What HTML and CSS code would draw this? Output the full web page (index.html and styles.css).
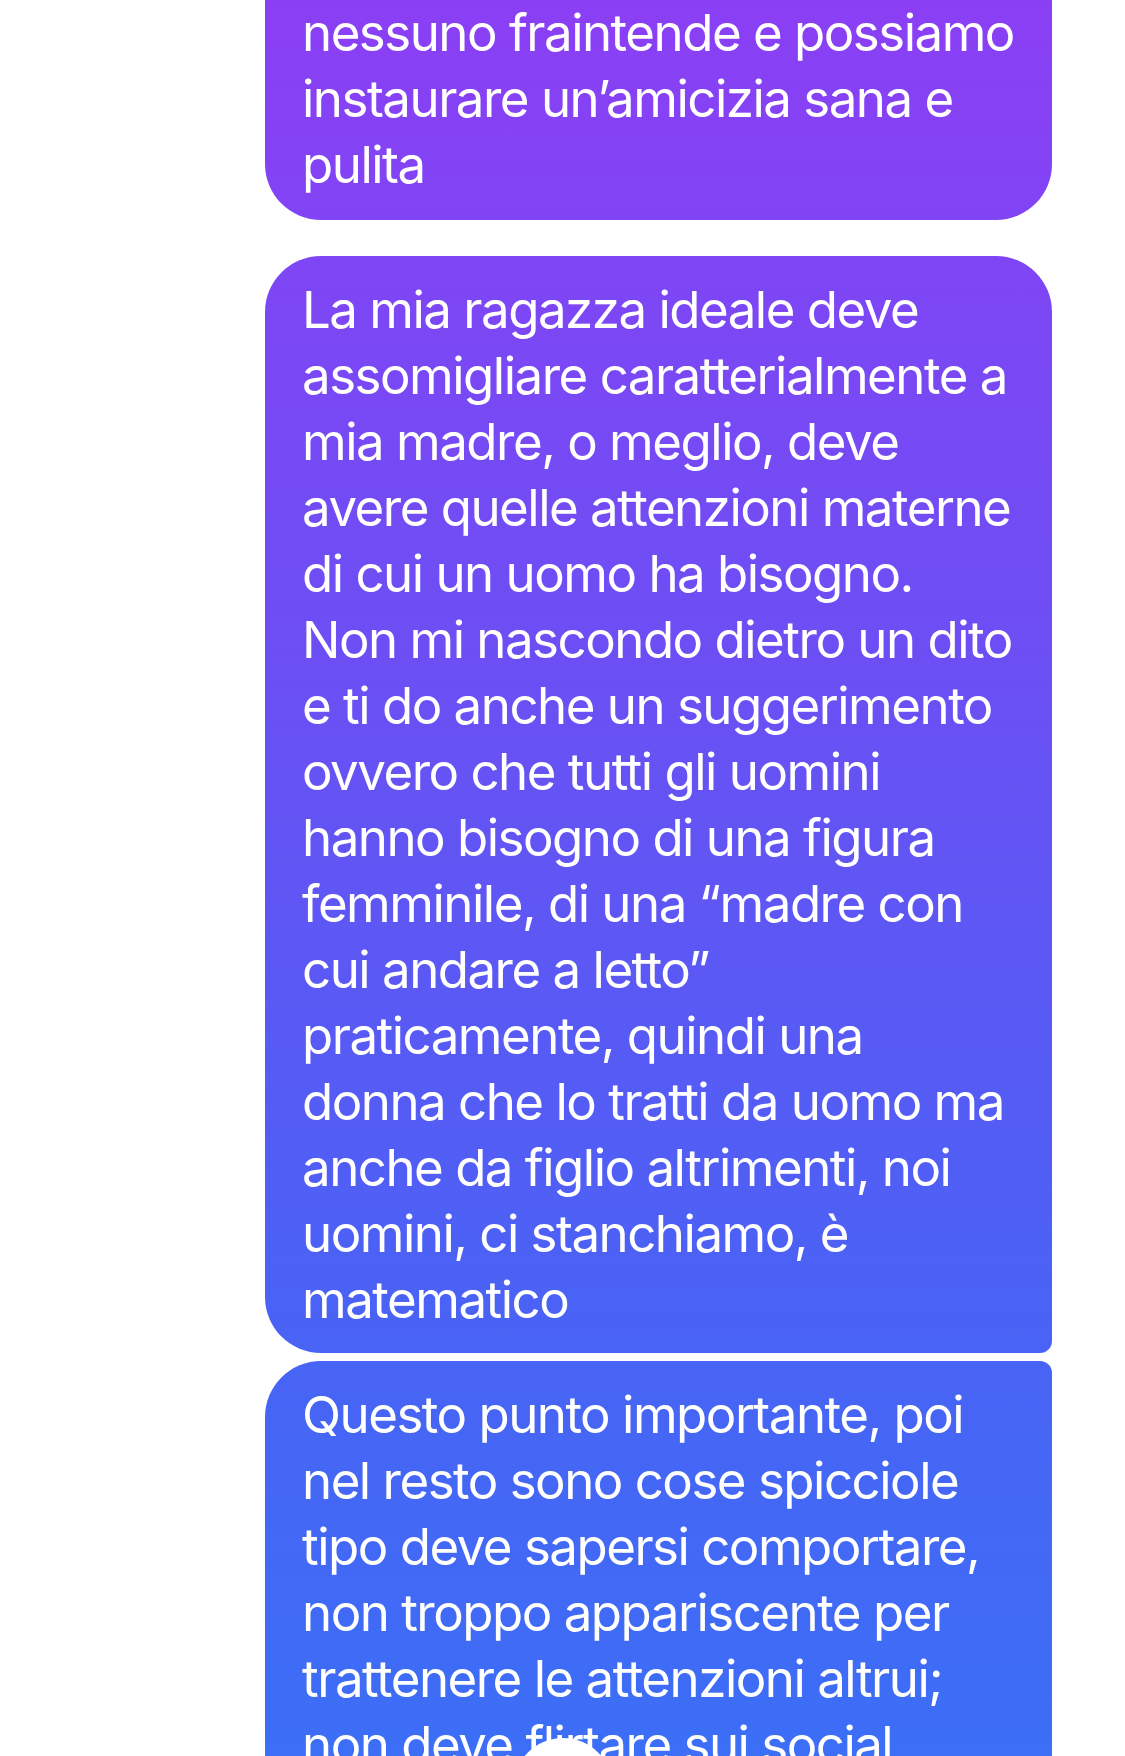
FILE: index.html
```html
<!DOCTYPE html>
<html lang="it">
<head>
    <meta charset="UTF-8">
    <meta name="viewport" content="width=device-width, initial-scale=1.0">
    <title>Messaggi</title>
    <link rel="stylesheet" href="styles.css">
</head>
<body>
    <div class="thread">
        <div class="bubble sent cut">
            nessuno fraintende e possiamo<br>
            instaurare un’amicizia sana e<br>
            pulita
        </div>

        <div class="bubble sent group-top">
            La mia ragazza ideale deve<br>
            assomigliare caratterialmente a<br>
            mia madre, o meglio, deve<br>
            avere quelle attenzioni materne<br>
            di cui un uomo ha bisogno.<br>
            Non mi nascondo dietro un dito<br>
            e ti do anche un suggerimento<br>
            ovvero che tutti gli uomini<br>
            hanno bisogno di una figura<br>
            femminile, di una “madre con<br>
            cui andare a letto”<br>
            praticamente, quindi una<br>
            donna che lo tratti da uomo ma<br>
            anche da figlio altrimenti, noi<br>
            uomini, ci stanchiamo, è<br>
            matematico
        </div>
        <div class="bubble sent group-mid">
            Questo punto importante, poi<br>
            nel resto sono cose spicciole<br>
            tipo deve sapersi comportare,<br>
            non troppo appariscente per<br>
            trattenere le attenzioni altrui;<br>
            non deve flirtare sui social<br>
            e non deve dare confidenza
        </div>
    </div>

    <div class="scroll-btn"></div>
</body>
</html>
```

FILE: styles.css
```css
html, body {
    margin: 0;
    padding: 0;
    background-color: #fff;
}
body {
    font-family: Inter, "Noto Sans", sans-serif;
    height: 1756px;
    overflow: hidden;
    position: relative;
}
.thread {
    display: flex;
    flex-direction: column;
    align-items: flex-end;
    padding: 0 73px 0 265px;
}
.bubble {
    box-sizing: border-box;
    width: 787px;
    padding: 21px 37px 20px;
    border-radius: 56px;
    color: #fff;
    font-size: 51px;
    line-height: 66px;
    letter-spacing: -1.5px;
    white-space: nowrap;
    background: linear-gradient(180deg, #8b3ff5 0px, #6c4ff4 650px, #4a62f5 1300px, #3c6ef6 1756px);
    background-attachment: fixed;
}
.bubble.cut {
    margin-top: -80px;
    padding-top: 80px;
    padding-bottom: 22px;
}
.bubble + .bubble {
    margin-top: 36px;
}
.bubble.group-top {
    border-bottom-right-radius: 12px;
}
.bubble.group-mid {
    margin-top: 8px;
    border-top-right-radius: 12px;
    border-bottom-right-radius: 12px;
    padding-bottom: 200px;
}
.scroll-btn {
    position: absolute;
    left: 513px;
    top: 1738px;
    width: 100px;
    height: 100px;
    border-radius: 50%;
    background: #fff;
}
```
